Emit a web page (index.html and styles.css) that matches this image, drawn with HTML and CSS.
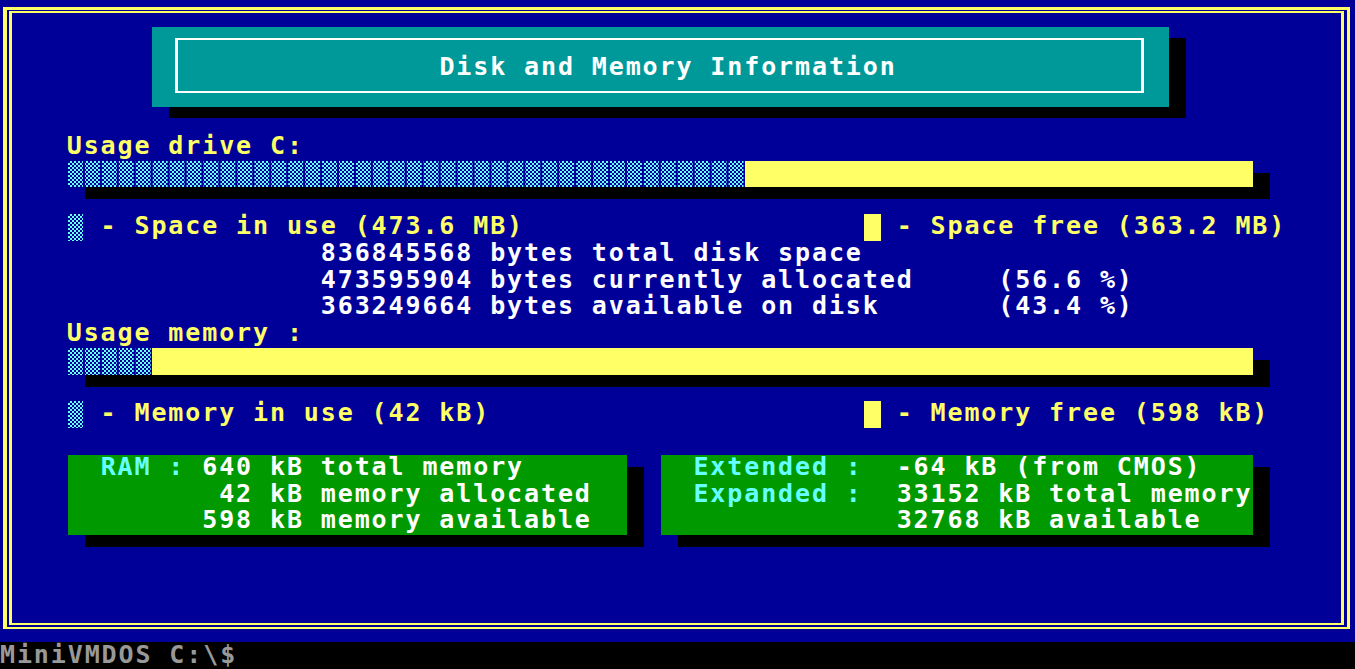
FILE: index.html
```html
<!DOCTYPE html>
<html lang="en">
<head>
<meta charset="utf-8">
<title>Disk and Memory Information</title>
<link rel="stylesheet" href="styles.css">
</head>
<body>
<div class="screen">
  <main class="desktop">
    <header class="title">
      <div class="title-frame"><h1 class="title-text">Disk and Memory Information</h1></div>
    </header>

    <div class="label drive-label">Usage drive C:</div>
    <div class="bar drive-bar">
      <div class="bar-used shade" style="width:57.143%"></div>
      <div class="bar-free"></div>
    </div>
    <div class="legend legend-left drive-legend"><span class="mark shade"></span><span class="t"> - Space in use (473.6 MB)</span></div>
    <div class="legend legend-right drive-legend"><span class="mark solid"></span><span class="t"> - Space free (363.2 MB)</span></div>

    <div class="stat stat-1">836845568 bytes total disk space</div>
    <div class="stat stat-2">473595904 bytes currently allocated     (56.6 %)</div>
    <div class="stat stat-3">363249664 bytes available on disk       (43.4 %)</div>

    <div class="label mem-label">Usage memory :</div>
    <div class="bar mem-bar">
      <div class="bar-used shade" style="width:7.143%"></div>
      <div class="bar-free"></div>
    </div>
    <div class="legend legend-left mem-legend"><span class="mark shade"></span><span class="t"> - Memory in use (42 kB)</span></div>
    <div class="legend legend-right mem-legend"><span class="mark solid"></span><span class="t"> - Memory free (598 kB)</span></div>

    <section class="box box-ram">
      <div class="line">  <span class="key">RAM :</span> 640 kB total memory</div>
      <div class="line">         42 kB memory allocated</div>
      <div class="line">        598 kB memory available</div>
    </section>
    <section class="box box-ext">
      <div class="line">  <span class="key">Extended :</span>  -64 kB (from CMOS)</div>
      <div class="line">  <span class="key">Expanded :</span>  33152 kB total memory</div>
      <div class="line">              32768 kB available</div>
    </section>
  </main>
  <footer class="prompt">MiniVMDOS C:\$</footer>
</div>
</body>
</html>
```
FILE: styles.css
```css
:root {
  --cw: 16.9375px;
  --rh: 26.7625px;
  --blue: #000099;
  --yellow: #ffff66;
  --teal: #009999;
  --green: #009900;
  --lcyan: #66ffff;
  --gray: #999999;
}

* { box-sizing: border-box; margin: 0; padding: 0; }

html, body {
  width: 1355px;
  height: 669px;
  overflow: hidden;
  background: #000;
}

body {
  margin: 0;
  font-family: "DejaVu Sans Mono", "Liberation Mono", monospace;
  font-weight: bold;
  font-size: 25px;
  letter-spacing: 1.886px;
  line-height: 23px;
}

.screen {
  display: flex;
  flex-direction: column;
  width: 1355px;
  height: 669px;
}

.desktop {
  position: relative;
  display: grid;
  grid-template-columns: repeat(80, var(--cw));
  grid-template-rows: repeat(24, var(--rh));
  height: calc(var(--rh) * 24);
  background: var(--blue);
  flex: none;
}

/* double-line window frame */
.desktop::before {
  content: "";
  position: absolute;
  left: 3px;
  top: 7px;
  right: 5px;
  bottom: 13.3px;
  border: 3px solid var(--yellow);
  border-left-width: 4px;
  border-bottom-width: 2px;
  pointer-events: none;
}
.desktop::after {
  content: "";
  position: absolute;
  left: 9px;
  top: 11px;
  right: 11px;
  bottom: 17.3px;
  border: 2px solid var(--yellow);
  border-left-width: 3px;
  border-right-width: 3px;
  pointer-events: none;
}

/* title */
.title {
  grid-column: 10 / span 60;
  grid-row: 2 / span 3;
  background: var(--teal);
  box-shadow: var(--cw) 11px 0 #000;
  padding: 11.24px 24.69px 14.05px 22.56px;
}
.title-frame {
  height: 100%;
  border: 2px solid #fff;
  border-left-width: 3px;
  border-right-width: 3px;
  padding: 15px 0 0 261.4px;
}
.title-text {
  font: inherit;
  color: #fff;
  white-space: pre;
}

/* labels */
.label {
  grid-column: 5 / span 70;
  color: var(--yellow);
  white-space: pre;
  margin-left: -1px;
}
.drive-label { grid-row: 6; }
.mem-label { grid-row: 13; }

/* bars */
.bar {
  grid-column: 5 / span 70;
  display: flex;
  box-shadow: var(--cw) 12px 0 #000;
}
.drive-bar { grid-row: 7; }
.mem-bar { grid-row: 14; }

.shade {
  background:
    linear-gradient(to right, transparent 0 15px, var(--blue) 15px) 0 0 / var(--cw) 100% repeat-x,
    conic-gradient(var(--lcyan) 0 25%, var(--blue) 0 50%, var(--lcyan) 0 75%, var(--blue) 0) 0 0 / 4px 4px;
}
.bar-used { flex: none; height: 100%; }
.bar-free { flex: 1; background: var(--yellow); }

/* legends */
.legend {
  display: flex;
  align-items: flex-start;
  color: var(--yellow);
}
.legend-left { grid-column: 5 / span 40; }
.legend-right { grid-column: 52 / span 28; }
.drive-legend { grid-row: 9; }
.mem-legend { grid-row: 16; }

.mark {
  flex: none;
  width: var(--cw);
  height: var(--rh);
}
.mark.solid { background: var(--yellow); }
.t { white-space: pre; margin-left: -1px; }

/* disk stats */
.stat {
  grid-column: 20 / span 60;
  color: #fff;
  white-space: pre;
  margin-left: -1px;
}
.stat-1 { grid-row: 10; }
.stat-2 { grid-row: 11; }
.stat-3 { grid-row: 12; }

/* memory boxes */
.box {
  grid-row: 18 / span 3;
  display: grid;
  grid-auto-rows: var(--rh);
  background: var(--green);
  box-shadow: var(--cw) 12px 0 #000;
  color: #fff;
}
.box-ram { grid-column: 5 / span 33; }
.box-ext { grid-column: 40 / span 35; }
.line { white-space: pre; text-indent: -1px; }
.key { color: var(--lcyan); }

/* prompt */
.prompt {
  flex: 1;
  background: #000;
  color: var(--gray);
  white-space: pre;
  padding-top: 1px;
}
```
